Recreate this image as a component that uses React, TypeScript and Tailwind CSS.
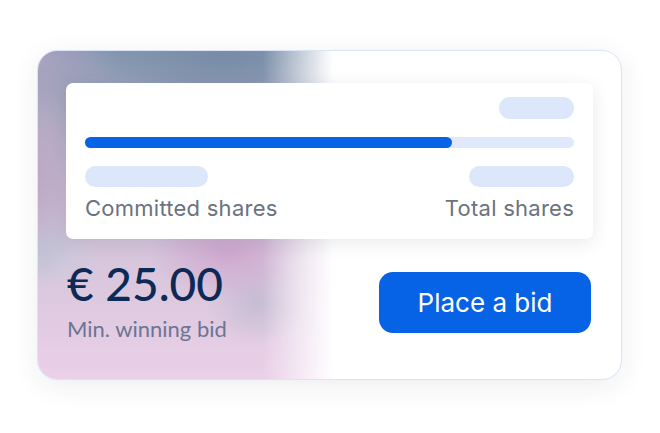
import React from 'react';

function Pill({ className }: { className: string }) {
  return <div className={`h-[21px] rounded-full bg-[#dce7fb] ${className}`} />;
}

function App() {
  return (
    <div className="w-[660px] h-[433px] bg-white pt-[50px] pl-[37px] font-['Inter',sans-serif]">
      <div className="relative w-[585px] h-[330px] rounded-[20px] border border-[#d9e4f8] bg-white shadow-[0_6px_28px_rgba(30,40,70,0.08)] overflow-hidden">
        {/* blurred colour wash behind the left half */}
        <div className="absolute inset-y-0 left-0 w-[300px] pointer-events-none [mask-image:linear-gradient(to_right,black_225px,transparent_295px)] bg-[radial-gradient(130px_50px_at_185px_5px,#788ca7,transparent),radial-gradient(80px_55px_at_0px_10px,#aaa3c0,transparent),radial-gradient(50px_110px_at_0px_120px,#bba7c4,transparent),radial-gradient(55px_40px_at_5px_198px,#c3cad9,transparent),radial-gradient(80px_50px_at_190px_200px,#cea7d0,transparent),radial-gradient(50px_45px_at_218px_250px,#c6bdd3,transparent),linear-gradient(to_bottom,#8597b0,#cbbfd3_40%,#ead0e8)]" />

        <div className="relative pt-[32px] px-[28px]">
          <div className="h-[156px] rounded-[7px] bg-white shadow-[0_4px_18px_rgba(30,40,70,0.10)] pt-[14px] px-[19px]">
            <div className="flex justify-end">
              <div className="w-[75px] h-[22px] rounded-full bg-[#dce7fb]" />
            </div>
            <div className="mt-[18px] h-[11px] rounded-full bg-[#dfe9fb]">
              <div className="h-full w-[367px] rounded-full bg-[#0763e5]" />
            </div>
            <div className="mt-[18px] flex justify-between">
              <Pill className="w-[123px]" />
              <Pill className="w-[105px]" />
            </div>
            <div className="mt-[6px] flex justify-between text-[22px] leading-[30px] tracking-[0.25px] text-[#6b7280]">
              <span>Committed shares</span>
              <span>Total shares</span>
            </div>
          </div>

          <div className="flex justify-between items-start">
            <div className="mt-[22px] pl-[1px] font-['Lato',sans-serif]">
              <div className="text-[46px] leading-[46px] font-medium text-[#0c2a55]">€ 25.00</div>
              <div className="mt-[9px] text-[22px] leading-[26px] text-[#6b7591]">Min. winning bid</div>
            </div>
            <button className="mt-[33px] mr-[2px] w-[212px] h-[61px] rounded-[14px] bg-[#0763e5] text-white text-[26px]">
              Place a bid
            </button>
          </div>
        </div>
      </div>
    </div>
  );
}

export default App;
